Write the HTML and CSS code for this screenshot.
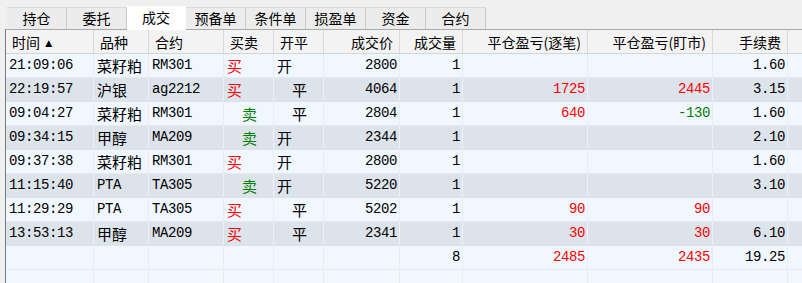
FILE: index.html
```html
<!DOCTYPE html>
<html lang="zh-CN">
<head>
  <meta charset="UTF-8">
  <title>成交</title>
  <link rel="stylesheet" href="styles.css">
</head>
<body>

<div class="tabs">
  <div class="tab">持仓</div>
  <div class="tab">委托</div>
  <div class="tab active">成交</div>
  <div class="tab">预备单</div>
  <div class="tab">条件单</div>
  <div class="tab">损盈单</div>
  <div class="tab">资金</div>
  <div class="tab">合约</div>
</div>

<div class="grid">
  <div class="row head">
    <div class="cell">时间 <span class="sort">▲</span></div>
    <div class="cell">品种</div>
    <div class="cell">合约</div>
    <div class="cell">买卖</div>
    <div class="cell">开平</div>
    <div class="cell r">成交价</div>
    <div class="cell r">成交量</div>
    <div class="cell r">平仓盈亏(逐笔)</div>
    <div class="cell r">平仓盈亏(盯市)</div>
    <div class="cell r">手续费</div>
    <div class="cell"></div>
  </div>

  <div class="row">
    <div class="cell num">21:09:06</div><div class="cell zh">菜籽粕</div><div class="cell num">RM301</div>
    <div class="cell zh buy">买</div><div class="cell zh">开</div>
    <div class="cell num r">2800</div><div class="cell num r">1</div>
    <div class="cell num r"></div><div class="cell num r"></div><div class="cell num r">1.60</div><div class="cell"></div>
  </div>
  <div class="row alt">
    <div class="cell num">22:19:57</div><div class="cell zh">沪银</div><div class="cell num">ag2212</div>
    <div class="cell zh buy">买</div><div class="cell zh close">平</div>
    <div class="cell num r">4064</div><div class="cell num r">1</div>
    <div class="cell num r red">1725</div><div class="cell num r red">2445</div><div class="cell num r">3.15</div><div class="cell"></div>
  </div>
  <div class="row">
    <div class="cell num">09:04:27</div><div class="cell zh">菜籽粕</div><div class="cell num">RM301</div>
    <div class="cell zh sell">卖</div><div class="cell zh close">平</div>
    <div class="cell num r">2804</div><div class="cell num r">1</div>
    <div class="cell num r red">640</div><div class="cell num r green">-130</div><div class="cell num r">1.60</div><div class="cell"></div>
  </div>
  <div class="row alt">
    <div class="cell num">09:34:15</div><div class="cell zh">甲醇</div><div class="cell num">MA209</div>
    <div class="cell zh sell">卖</div><div class="cell zh">开</div>
    <div class="cell num r">2344</div><div class="cell num r">1</div>
    <div class="cell num r"></div><div class="cell num r"></div><div class="cell num r">2.10</div><div class="cell"></div>
  </div>
  <div class="row">
    <div class="cell num">09:37:38</div><div class="cell zh">菜籽粕</div><div class="cell num">RM301</div>
    <div class="cell zh buy">买</div><div class="cell zh">开</div>
    <div class="cell num r">2800</div><div class="cell num r">1</div>
    <div class="cell num r"></div><div class="cell num r"></div><div class="cell num r">1.60</div><div class="cell"></div>
  </div>
  <div class="row alt">
    <div class="cell num">11:15:40</div><div class="cell num">PTA</div><div class="cell num">TA305</div>
    <div class="cell zh sell">卖</div><div class="cell zh">开</div>
    <div class="cell num r">5220</div><div class="cell num r">1</div>
    <div class="cell num r"></div><div class="cell num r"></div><div class="cell num r">3.10</div><div class="cell"></div>
  </div>
  <div class="row">
    <div class="cell num">11:29:29</div><div class="cell num">PTA</div><div class="cell num">TA305</div>
    <div class="cell zh buy">买</div><div class="cell zh close">平</div>
    <div class="cell num r">5202</div><div class="cell num r">1</div>
    <div class="cell num r red">90</div><div class="cell num r red">90</div><div class="cell num r"></div><div class="cell"></div>
  </div>
  <div class="row alt">
    <div class="cell num">13:53:13</div><div class="cell zh">甲醇</div><div class="cell num">MA209</div>
    <div class="cell zh buy">买</div><div class="cell zh close">平</div>
    <div class="cell num r">2341</div><div class="cell num r">1</div>
    <div class="cell num r red">30</div><div class="cell num r red">30</div><div class="cell num r">6.10</div><div class="cell"></div>
  </div>
  <div class="row">
    <div class="cell"></div><div class="cell"></div><div class="cell"></div>
    <div class="cell"></div><div class="cell"></div>
    <div class="cell"></div><div class="cell num r">8</div>
    <div class="cell num r red">2485</div><div class="cell num r red">2435</div><div class="cell num r">19.25</div><div class="cell"></div>
  </div>
  <div class="row">
    <div class="cell"></div><div class="cell"></div><div class="cell"></div>
    <div class="cell"></div><div class="cell"></div><div class="cell"></div>
    <div class="cell"></div><div class="cell"></div><div class="cell"></div>
    <div class="cell"></div><div class="cell"></div>
  </div>
</div>

</body>
</html>
```

FILE: styles.css
```css
body {
  margin: 0;
  background-color: #f0f0f0;
  font-family: "Noto Sans CJK SC", sans-serif;
  color: #000;
  height: 283px;
  overflow: hidden;
}

/* tab strip */
.tabs {
  display: flex;
  padding: 7px 0 0 7px;
  height: 22px;
}

.tab {
  width: 59px;
  height: 21px;
  border-top: 1px solid #dadada;
  border-right: 1px solid #c9c9c9;
  background-color: #ececec;
  font-size: 14px;
  line-height: 21px;
  text-align: center;
}

.tab.active {
  background-color: #fff;
  border-color: #fff;
  margin-top: -1px;
  height: 23px;
  width: 58px;
}

/* table */
.grid {
  margin-left: 5px;
  border-top: 1px solid #a9a9a9;
  border-left: 1px solid #7a7a7a;
  height: 260px;
  overflow: hidden;
  background-color: #f0f7fe;
}

.row {
  display: grid;
  grid-template-columns: 88px 55px 75px 50px 50px 76px 63px 125px 125px 75px 40px;
  height: 24px;
  box-sizing: border-box;
  border-bottom: 1px solid #e6ebf0;
  background-color: #f0f7fe;
}

.row.alt {
  background-color: #dde3ea;
  border-bottom-color: #dde3ea;
}

.cell {
  box-sizing: border-box;
  border-right: 1px solid #e9edf2;
  padding: 0 2px 0 3px;
  white-space: nowrap;
  overflow: hidden;
  line-height: 23px;
}

.row.alt .cell {
  border-right-color: #eef2f6;
}

.head {
  background-color: #f3f3f3;
  border-bottom: 1px solid #d5d5d5;
  font-size: 14px;
}

.head .cell {
  border-right: 1px solid #d9d9d9;
  padding: 0 6px;
  line-height: 24px;
}

.sort {
  font-family: "DejaVu Sans", sans-serif;
  font-size: 9px;
  vertical-align: 2px;
  margin-left: 2px;
}

.r {
  text-align: right;
}

.num {
  font-family: "Liberation Mono", monospace;
  font-size: 14px;
  letter-spacing: -0.4px;
}

.zh {
  font-size: 15px;
}

.buy {
  color: #ff0000;
}

.sell {
  color: #008000;
  padding-left: 18px;
}

.close {
  padding-left: 18px;
}

.red {
  color: #ff0000;
}

.green {
  color: #008000;
}
```
